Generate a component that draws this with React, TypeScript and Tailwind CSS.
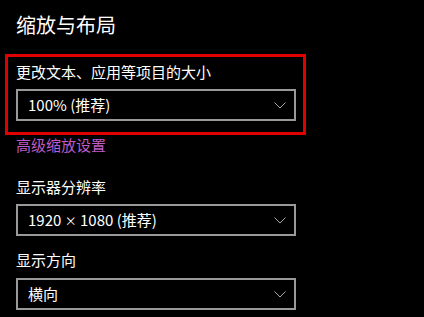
const font = { fontFamily: '"Noto Sans CJK SC", "Noto Sans", sans-serif' };

function Chevron() {
  return (
    <svg width="14" height="8" viewBox="0 0 14 8" fill="none" stroke="#a8a8a8" strokeWidth="1">
      <polyline points="1.5,1.5 7,7 12.5,1.5" />
    </svg>
  );
}

function Select({ value }: { value: React.ReactNode }) {
  return (
    <div className="flex h-[32px] w-[280px] items-center justify-between border-2 border-[#999999] bg-black pl-[10px] pr-[7px]">
      <span className="text-[15px] leading-[20px] text-white">{value}</span>
      <Chevron />
    </div>
  );
}

export default function App() {
  return (
    <div className="h-[317px] w-[424px] overflow-hidden bg-black pl-[16px] pt-[11px]" style={font}>
      {/* Heading */}
      <h1 className="text-[20px] font-normal leading-[28px] text-white">缩放与布局</h1>

      {/* Highlighted group */}
      <div className="ml-[-11px] mt-[15px] h-[81px] w-[301px] border-[3px] border-[#e00000] pl-[8px] pt-[5px]">
        <p className="text-[15px] leading-[20px] text-white">更改文本、应用等项目的大小</p>
        <div className="mt-[7px]">
          <Select value="100% (推荐)" />
        </div>
      </div>

      <p className="text-[15px] leading-[20px] text-[#bf5ac9]">高级缩放设置</p>

      <p className="mt-[22px] text-[15px] leading-[20px] text-white">显示器分辨率</p>
      <div className="mt-[7px]">
        <Select
          value={
            <>
              1920 <span className="text-[12px]">×</span> 1080 (推荐)
            </>
          }
        />
      </div>

      <p className="mt-[14px] text-[15px] leading-[20px] text-white">显示方向</p>
      <div className="mt-[8px]">
        <Select value="横向" />
      </div>
    </div>
  );
}
